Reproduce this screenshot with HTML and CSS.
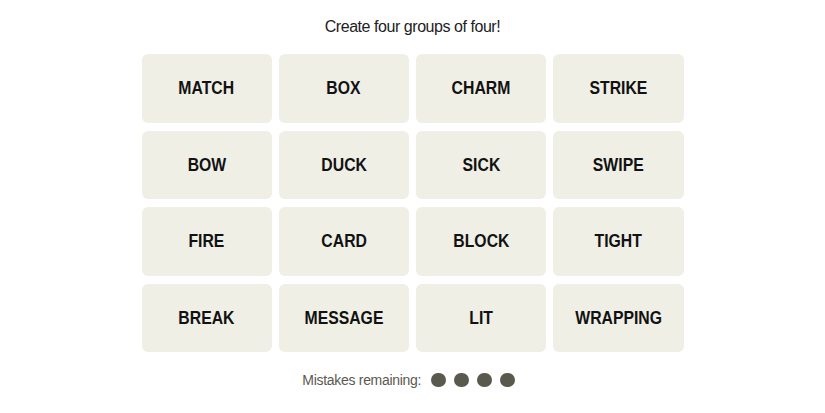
FILE: index.html
```html
<!DOCTYPE html>
<html lang="en">
<head>
<meta charset="utf-8">
<title>Connections</title>
<link rel="stylesheet" href="styles.css">
</head>
<body>
<main class="game">
  <p class="prompt">Create four groups of four!</p>
  <div class="board">
    <div class="tile"><span class="word">MATCH</span></div>
    <div class="tile"><span class="word">BOX</span></div>
    <div class="tile"><span class="word">CHARM</span></div>
    <div class="tile"><span class="word">STRIKE</span></div>
    <div class="tile"><span class="word">BOW</span></div>
    <div class="tile"><span class="word">DUCK</span></div>
    <div class="tile"><span class="word">SICK</span></div>
    <div class="tile"><span class="word">SWIPE</span></div>
    <div class="tile"><span class="word">FIRE</span></div>
    <div class="tile"><span class="word">CARD</span></div>
    <div class="tile"><span class="word">BLOCK</span></div>
    <div class="tile"><span class="word">TIGHT</span></div>
    <div class="tile"><span class="word">BREAK</span></div>
    <div class="tile"><span class="word">MESSAGE</span></div>
    <div class="tile"><span class="word">LIT</span></div>
    <div class="tile"><span class="word">WRAPPING</span></div>
  </div>
  <div class="mistakes">
    <span class="mistakes-label">Mistakes remaining:</span>
    <span class="dots">
      <span class="dot"></span><span class="dot"></span><span class="dot"></span><span class="dot"></span>
    </span>
  </div>
</main>
</body>
</html>
```
FILE: styles.css
```css
html, body {
  margin: 0;
  padding: 0;
  background: #ffffff;
}
body {
  font-family: "Liberation Sans", Arial, sans-serif;
  color: #121212;
}
.game {
  display: flex;
  flex-direction: column;
  align-items: center;
  padding-top: 17px;
}
.prompt {
  margin: 0;
  font-size: 16px;
  line-height: 20px;
  color: #222222;
  letter-spacing: -0.45px;
}
.board {
  margin-top: 17px;
  width: 542px;
  display: grid;
  grid-template-columns: repeat(4, 1fr);
  grid-auto-rows: 68.5px;
  gap: 8px 7.3px;
}
.tile {
  background: #efefe6;
  border-radius: 6px;
  display: flex;
  align-items: center;
  justify-content: center;
  font-weight: 700;
  font-size: 18.8px;
  color: #121212;
}
.word {
  display: inline-block;
  transform: scaleX(0.84);
}
.mistakes {
  margin-top: 20px;
  margin-right: 8px;
  display: flex;
  align-items: center;
  gap: 10px;
}
.mistakes-label {
  font-size: 14px;
  color: #5a594e;
  letter-spacing: -0.3px;
}
.dots {
  display: flex;
  gap: 8.5px;
}
.dot {
  width: 14.5px;
  height: 14.5px;
  border-radius: 50%;
  background: #5a594e;
}
```
